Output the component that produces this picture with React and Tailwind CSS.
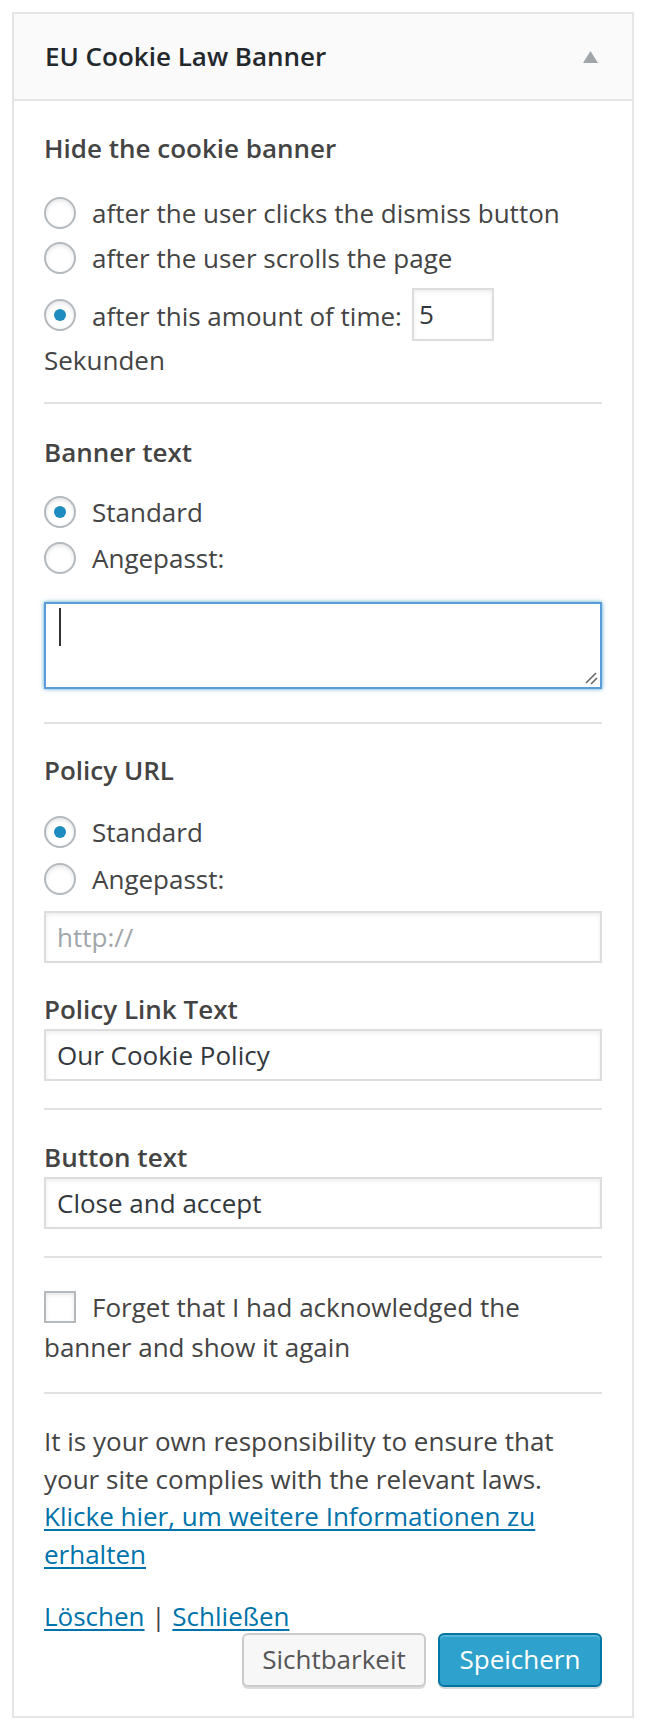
import React from 'react';

const Radio = ({ checked }) => (
  <span className="relative inline-flex h-[32px] w-[32px] shrink-0 items-center justify-center rounded-full border-2 border-[#b4b9be] bg-white shadow-[inset_0_2px_4px_rgba(0,0,0,0.1)]">
    {checked && <span className="h-[12px] w-[12px] rounded-full bg-[#1e8cbe]" />}
  </span>
);

const RadioRow = ({ checked, children, className = '' }) => (
  <div className={`flex h-[36px] items-center gap-[16px] ${className}`}>
    <Radio checked={checked} />
    <span>{children}</span>
  </div>
);

const Heading = ({ children, className = '' }) => (
  <div className={`h-[36px] font-semibold leading-[36px] text-[#444] ${className}`}>{children}</div>
);

const TextInput = ({ value, placeholder, className = '' }) => (
  <div
    className={`flex h-[52px] items-center border-2 border-[#ddd] bg-white pl-[11px] shadow-[inset_0_2px_4px_rgba(0,0,0,0.07)] ${className}`}
  >
    {value ? (
      <span className="text-[#32373c]">{value}</span>
    ) : (
      <span className="text-[#a0a5aa]">{placeholder}</span>
    )}
  </div>
);

const Divider = ({ className = '' }) => <div className={`h-[2px] bg-[#e1e1e1] ${className}`} />;

export default function App() {
  return (
    <div className="min-h-[1730px] w-[646px] bg-white pl-[12px] pt-[12px] font-['Open_Sans',sans-serif] text-[26px] text-[#444]">
      <div className="w-[622px] border-2 border-[#e5e5e5] bg-white">
        {/* header */}
        <div className="flex h-[87px] items-center justify-between border-b-2 border-[#e5e5e5] bg-[#fafafa] pl-[31px] pr-[34px]">
          <h3 className="font-semibold text-[#23282d]">EU Cookie Law Banner</h3>
          <svg width="15" height="12" viewBox="0 0 15 12">
            <polygon points="7.5,0 15,12 0,12" fill="#a0a5aa" />
          </svg>
        </div>

        <div className="px-[30px] pb-[29px]">
          {/* hide the banner */}
          <Heading className="mt-[29px]">Hide the cookie banner</Heading>
          <RadioRow className="mt-[29px]">after the user clicks the dismiss button</RadioRow>
          <RadioRow className="mt-[9px]">after the user scrolls the page</RadioRow>
          <div className="mt-[12px] flex h-[53px] items-center">
            <Radio checked />
            <span className="ml-[16px] mt-[4px]">after this amount of time:</span>
            <div className="ml-[10px] flex h-[53px] w-[82px] items-center border-2 border-[#ddd] pl-[5px] text-[#32373c] shadow-[inset_0_2px_4px_rgba(0,0,0,0.07)]">
              5
            </div>
          </div>
          <div className="mt-[1px] h-[36px] leading-[36px]">Sekunden</div>
          <Divider className="mt-[24px]" />

          {/* banner text */}
          <Heading className="mt-[30px]">Banner text</Heading>
          <RadioRow checked className="mt-[24px]">Standard</RadioRow>
          <RadioRow className="mt-[10px]">Angepasst:</RadioRow>
          <div className="relative mt-[26px] h-[87px] border-2 border-[#5b9dd9] bg-white shadow-[0_0_4px_rgba(30,140,190,0.8)]">
            <span className="absolute left-[13px] top-[4px] h-[38px] w-[2px] bg-[#333]" />
            <svg className="absolute bottom-[2px] right-[2px]" width="14" height="14" viewBox="0 0 14 14">
              <line x1="2" y1="12" x2="12" y2="2" stroke="#666" strokeWidth="1.6" />
              <line x1="7" y1="13" x2="13" y2="7" stroke="#666" strokeWidth="1.6" />
            </svg>
          </div>
          <Divider className="mt-[33px]" />

          {/* policy url */}
          <Heading className="mt-[28px]">Policy URL</Heading>
          <RadioRow checked className="mt-[26px]">Standard</RadioRow>
          <RadioRow className="mt-[11px]">Angepasst:</RadioRow>
          <TextInput placeholder="http://" className="mt-[14px]" />
          <Heading className="mt-[28px]">Policy Link Text</Heading>
          <TextInput value="Our Cookie Policy" className="mt-[2px]" />
          <Divider className="mt-[27px]" />

          {/* button text */}
          <Heading className="mt-[29px]">Button text</Heading>
          <TextInput value="Close and accept" className="mt-[2px]" />
          <Divider className="mt-[27px]" />

          {/* forget */}
          <p className="mt-[29px] leading-[40px]">
            <span className="mr-[16px] inline-block h-[32px] w-[32px] border-2 border-[#b4b9be] bg-white align-[-6px] shadow-[inset_0_2px_4px_rgba(0,0,0,0.1)]" />
            Forget that I had acknowledged the banner and show it again
          </p>
          <Divider className="mt-[25px]" />

          {/* note */}
          <p className="mt-[29px] leading-[37.7px]">
            It is your own responsibility to ensure that your site complies with the relevant laws.
            <br />
            <a href="#" className="text-[#0073aa] underline underline-offset-[3px]">
              Klicke hier, um weitere Informationen zu erhalten
            </a>
          </p>

          <div className="mt-[24px] leading-[37.7px]">
            <a href="#" className="text-[#0073aa] underline underline-offset-[3px]">Löschen</a>
            {' | '}
            <a href="#" className="text-[#0073aa] underline underline-offset-[3px]">Schließen</a>
          </div>

          <div className="-mt-[3px] flex justify-end gap-[12px]">
            <button className="h-[54px] w-[184px] rounded-[6px] border-2 border-[#ccc] bg-[#f7f7f7] text-[#555] shadow-[0_2px_0_#ddd]">
              Sichtbarkeit
            </button>
            <button className="h-[54px] w-[164px] rounded-[6px] border-2 border-[#0074a2] bg-[#2ea2cc] text-white shadow-[inset_0_2px_0_rgba(120,200,230,0.5),0_2px_0_rgba(0,0,0,0.15)]">
              Speichern
            </button>
          </div>
        </div>
      </div>
    </div>
  );
}
